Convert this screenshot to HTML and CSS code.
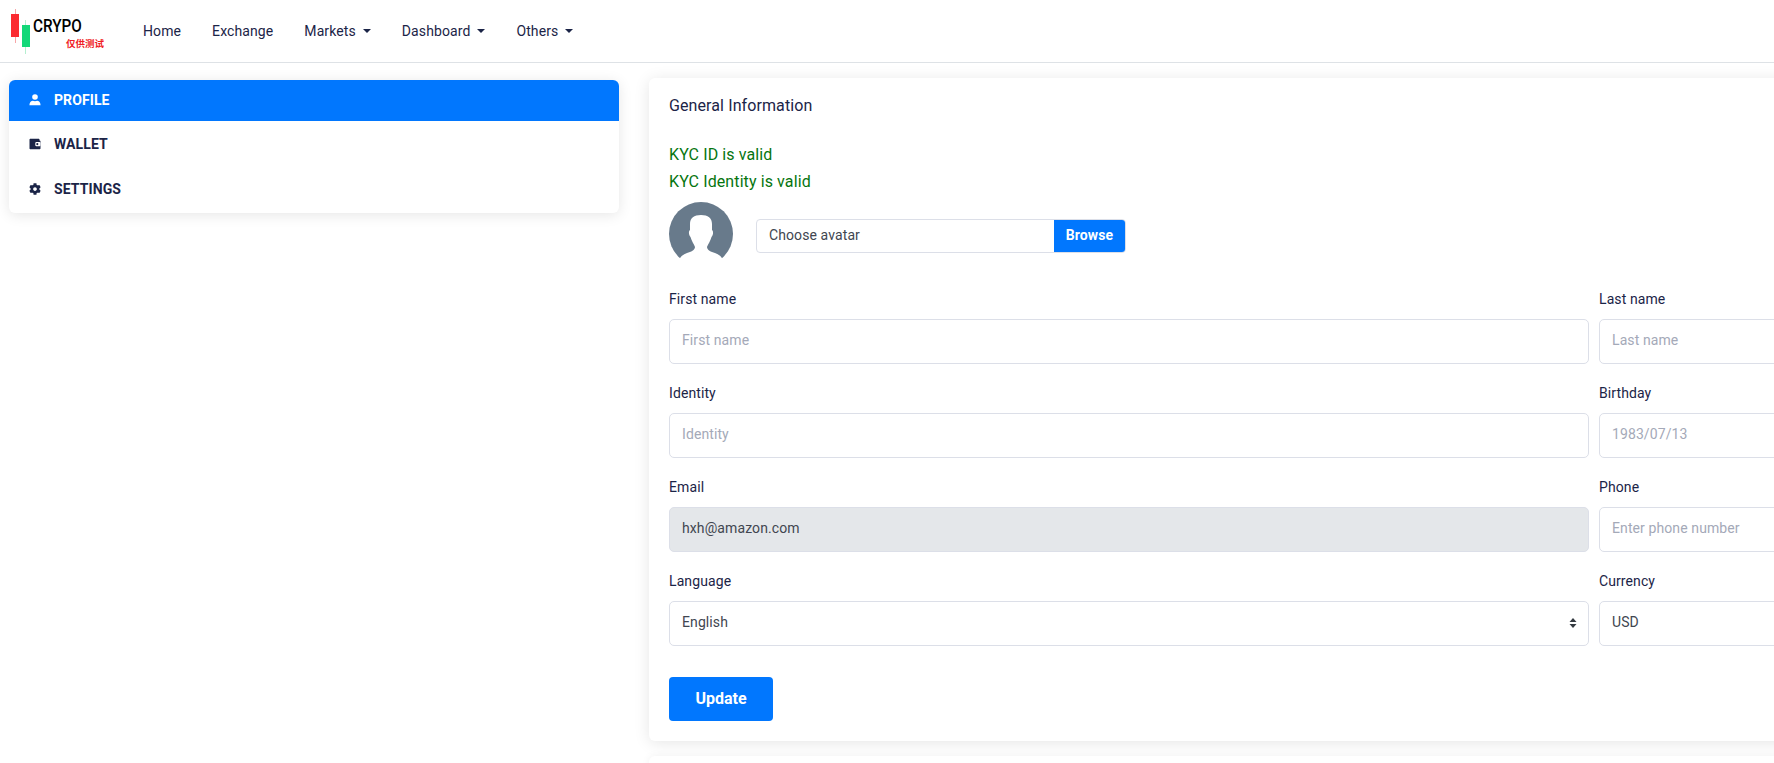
FILE: index.html
```html
<!DOCTYPE html>
<html lang="en">
<head>
    <meta charset="UTF-8">
    <title>Profile</title>
    <link rel="stylesheet" href="styles.css">
</head>
<body>

    <header class="topbar">
        <a class="logo" href="#">
            <svg class="logo-mark" width="24" height="46" viewBox="0 0 24 46">
                <rect x="5" y="0" width="1" height="34" fill="#f7a6a8"/>
                <rect x="1" y="5" width="8" height="23" fill="#fb2a30"/>
                <rect x="15" y="11" width="1" height="34" fill="#b5efd0"/>
                <rect x="12" y="16" width="8" height="22" fill="#12d878"/>
            </svg>
            <span class="logo-name">CRYPO</span>
            <span class="logo-note">仅供测试</span>
        </a>
        <nav class="nav">
            <a href="#">Home</a>
            <a href="#">Exchange</a>
            <a href="#" class="has-caret">Markets</a>
            <a href="#" class="has-caret">Dashboard</a>
            <a href="#" class="has-caret">Others</a>
        </nav>
    </header>

    <div class="page">
        <aside class="side-menu">
            <a href="#" class="side-item active">
                <svg class="side-icon" viewBox="0 0 12 12"><circle cx="6" cy="3" r="2.8" fill="currentColor"/><path d="M0.4 11.2c0-3 2-4.400 3.400-4.400 1.400.6 3 .6 4.400 0 1.400 0 3.400 1.400 3.400 4.400z" fill="currentColor"/></svg>
                PROFILE
            </a>
            <a href="#" class="side-item">
                <svg class="side-icon" viewBox="0 0 12 12"><path d="M1.500 .8h8c.6 0 1 .4 1 1v.6h.1c.5 0 .9.4.9.9v6.900c0 .6-.4 1-1 1H1.500c-.6 0-1-.4-1-1V1.800c0-.6.4-1 1-1z" fill="currentColor"/><rect x="6.300" y="3.900" width="5.200" height="4.400" rx="1" fill="#fff"/><circle cx="8.300" cy="6.100" r="1.100" fill="currentColor"/></svg>
                WALLET
            </a>
            <a href="#" class="side-item">
                <svg class="side-icon" viewBox="0 0 512 512"><path fill="currentColor" d="M487.400 315.700l-42.600-24.600c4.300-23.200 4.300-47 0-70.200l42.600-24.600c4.900-2.800 7.100-8.600 5.500-14-11.100-35.600-30-67.800-54.700-94.600-3.800-4.100-10-5.100-14.800-2.300L380.800 110c-17.900-15.400-38.500-27.300-60.800-35.100V25.800c0-5.600-3.900-10.500-9.400-11.700-36.700-8.200-74.300-7.800-109.200 0-5.500 1.200-9.400 6.100-9.400 11.700V75c-22.200 7.900-42.800 19.800-60.800 35.100L88.700 85.500c-4.900-2.800-11-1.900-14.800 2.300-24.700 26.700-43.600 58.900-54.700 94.600-1.700 5.400.6 11.200 5.500 14L67.300 221c-4.300 23.200-4.300 47 0 70.200l-42.600 24.600c-4.900 2.800-7.100 8.600-5.500 14 11.100 35.600 30 67.800 54.700 94.600 3.800 4.100 10 5.100 14.800 2.300l42.600-24.600c17.900 15.400 38.500 27.300 60.800 35.100v49.200c0 5.600 3.900 10.500 9.400 11.700 36.700 8.200 74.300 7.800 109.200 0 5.500-1.200 9.400-6.100 9.400-11.700v-49.200c22.200-7.900 42.800-19.800 60.800-35.100l42.600 24.600c4.900 2.800 11 1.900 14.800-2.300 24.700-26.700 43.600-58.900 54.700-94.600 1.500-5.500-.7-11.300-5.600-14.100zM256 336c-44.100 0-80-35.900-80-80s35.900-80 80-80 80 35.900 80 80-35.900 80-80 80z"/></svg>
                SETTINGS
            </a>
        </aside>

        <main class="content">
            <section class="card">
                <h5 class="card-title">General Information</h5>
                <p class="kyc-ok first">KYC ID is valid</p>
                <p class="kyc-ok">KYC Identity is valid</p>

                <div class="avatar-row">
                    <svg class="avatar" width="64" height="64" viewBox="0 0 64 64">
                        <circle cx="32" cy="32" r="32" fill="#687a8b"/>
                        <path d="M32 13C39 13 43 16 43 22L43 28C44.500 29 44.500 33 42.500 35C41.500 39 39 42 38 45C38 48 42 50 46 51C49 52 52 54 53.500 57L64 57L64 64L0 64L0 57L10.500 57C12 54 15 52 18 51C22 50 26 48 26 45C25 42 22.500 39 21.500 35C19.500 33 19.500 29 21 28L21 22C21 16 25 13 32 13z" fill="#fff"/>
                    </svg>
                    <div class="file-picker">
                        <span class="file-label">Choose avatar</span>
                        <span class="file-button">Browse</span>
                    </div>
                </div>

                <form class="form-grid">
                    <div class="field">
                        <label for="firstName">First name</label>
                        <input id="firstName" type="text" placeholder="First name">
                    </div>
                    <div class="field">
                        <label for="lastName">Last name</label>
                        <input id="lastName" type="text" placeholder="Last name">
                    </div>
                    <div class="field">
                        <label for="identity">Identity</label>
                        <input id="identity" type="text" placeholder="Identity">
                    </div>
                    <div class="field">
                        <label for="birthday">Birthday</label>
                        <input id="birthday" type="text" placeholder="1983/07/13">
                    </div>
                    <div class="field">
                        <label for="email">Email</label>
                        <input id="email" type="text" value="hxh@amazon.com" disabled>
                    </div>
                    <div class="field">
                        <label for="phone">Phone</label>
                        <input id="phone" type="text" placeholder="Enter phone number">
                    </div>
                    <div class="field">
                        <label for="language">Language</label>
                        <div class="select-wrap">
                            <select id="language"><option>English</option></select>
                            <svg class="select-arrows" width="8" height="10" viewBox="0 0 8 10"><path d="M4 0l3.500 4H.5zM4 10L.5 6h7z" fill="#343a40"/></svg>
                        </div>
                    </div>
                    <div class="field">
                        <label for="currency">Currency</label>
                        <div class="select-wrap">
                            <select id="currency"><option>USD</option></select>
                            <svg class="select-arrows" width="8" height="10" viewBox="0 0 8 10"><path d="M4 0l3.500 4H.5zM4 10L.5 6h7z" fill="#343a40"/></svg>
                        </div>
                    </div>
                </form>

                <button class="update-btn" type="button">Update</button>
            </section>

            <section class="card next-card"></section>
        </main>
    </div>

</body>
</html>
```

FILE: styles.css
```css
html, body {
    margin: 0;
    height: 100%;
    overflow: hidden;
}
body {
    font-family: Roboto, "Noto Sans CJK SC", sans-serif;
    font-size: 14px;
    letter-spacing: 0.1px;
    color: #1b2447;
    background-color: #fff;
}
a {
    color: inherit;
    text-decoration: none;
}

/* top bar */
.topbar {
    display: flex;
    align-items: center;
    height: 62px;
    border-bottom: 1px solid #dee2e6;
}
.logo {
    position: relative;
    display: block;
    width: 120px;
    height: 62px;
    margin-left: 10px;
    flex: none;
}
.logo-mark {
    position: absolute;
    left: 0;
    top: 9px;
}
.logo-name {
    position: absolute;
    left: 23px;
    top: 15px;
    font-size: 18px;
    font-weight: 500;
    line-height: 22px;
    letter-spacing: 0;
    color: #000;
    transform: scaleX(0.85);
    transform-origin: left;
}
.logo-note {
    position: absolute;
    left: 56px;
    top: 38px;
    font-size: 9.500px;
    font-weight: 700;
    line-height: 12px;
    letter-spacing: 0;
    color: #f01c24;
}
.nav {
    display: flex;
    gap: 31px;
    margin-left: 13px;
}
.nav a {
    line-height: 21px;
}
.has-caret::after {
    content: "";
    display: inline-block;
    margin-left: 7px;
    vertical-align: 3px;
    border-top: 4px solid #1b2447;
    border-left: 4px solid transparent;
    border-right: 4px solid transparent;
}

/* page columns */
.page {
    display: flex;
    align-items: flex-start;
    gap: 30px;
    padding: 15px 0 0 9px;
}

/* side menu */
.side-menu {
    flex: none;
    width: 610px;
    margin-top: 2px;
    padding-bottom: 2px;
    border-radius: 6px;
    background: #fff;
    box-shadow: 0 2px 14px rgba(0, 0, 0, 0.1);
    overflow: hidden;
}
.side-item {
    display: flex;
    align-items: center;
    gap: 13px;
    box-sizing: border-box;
    height: 45px;
    padding-left: 20px;
    font-weight: 700;
}
.side-item.active {
    height: 41px;
    padding-bottom: 2px;
    background-color: #0177fe;
    color: #fff;
}
.side-icon {
    width: 12px;
    height: 12px;
}

/* main card */
.content {
    flex: none;
    width: 1900px;
}
.card {
    padding: 16px 20px 20px;
    border-radius: 6px;
    background: #fff;
    box-shadow: 0 2px 16px rgba(0, 0, 0, 0.1);
}
.next-card {
    height: 60px;
    margin-top: 15px;
    box-shadow: 0 0 8px rgba(0, 0, 0, 0.06);
}
.card-title {
    margin: 0;
    font-size: 16px;
    font-weight: 400;
    line-height: 24px;
}
.kyc-ok {
    margin: 0;
    font-size: 16px;
    line-height: 27px;
    color: #06750f;
}
.kyc-ok.first {
    margin-top: 23px;
}

.avatar-row {
    display: flex;
    align-items: center;
    gap: 23px;
    margin-top: 7px;
}
.avatar {
    flex: none;
}
.file-picker {
    display: flex;
    width: 370px;
    height: 34px;
    margin-top: 4px;
    box-sizing: border-box;
    border: 1px solid #dcdfe8;
    border-radius: 4px;
    overflow: hidden;
}
.file-label {
    flex: 1;
    padding-left: 12px;
    line-height: 31px;
    color: #414650;
}
.file-button {
    width: 71px;
    text-align: center;
    line-height: 31px;
    font-weight: 700;
    color: #fff;
    background-color: #0177fe;
}

/* form */
.form-grid {
    display: grid;
    grid-template-columns: 920px 920px;
    column-gap: 10px;
    row-gap: 19px;
    margin-top: 23px;
}
.field label {
    display: block;
    margin-bottom: 10px;
    line-height: 20px;
}
.field input, .field select {
    display: block;
    width: 100%;
    height: 45px;
    box-sizing: border-box;
    padding: 0 12px 3px;
    border: 1px solid #dcdfe8;
    border-radius: 5px;
    background: #fff;
    color: #414650;
    font: inherit;
    letter-spacing: inherit;
    appearance: none;
}
.field input::placeholder {
    color: #a4a9b8;
}
.field input:disabled {
    background-color: #e4e7ea;
    color: #414650;
}
.select-wrap {
    position: relative;
}
.select-arrows {
    position: absolute;
    right: 12px;
    top: 17px;
}

.update-btn {
    display: block;
    width: 104px;
    height: 44px;
    margin-top: 31px;
    padding-bottom: 3px;
    border: none;
    border-radius: 4px;
    background-color: #0177fe;
    color: #fff;
    font-family: inherit;
    font-size: 16px;
    font-weight: 700;
}
```
